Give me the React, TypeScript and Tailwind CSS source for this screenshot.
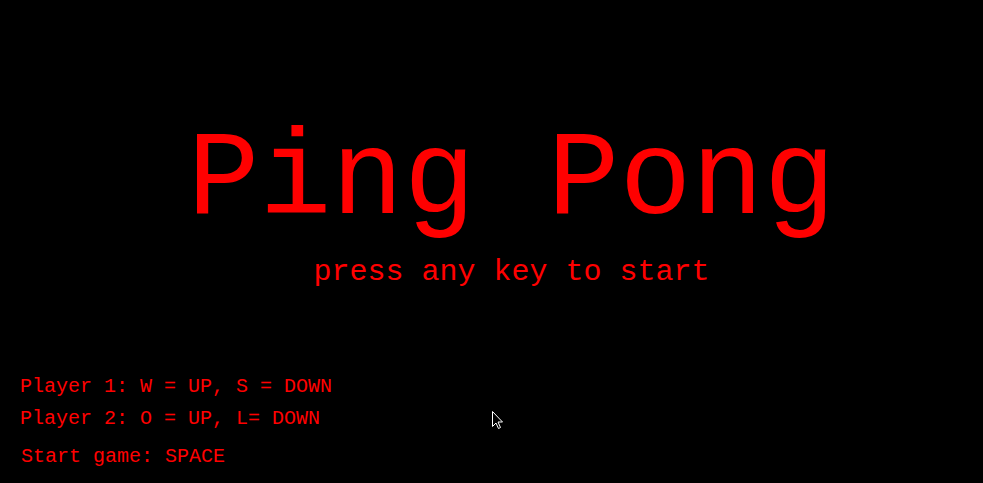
export default function App() {
    return (
        <div className="relative h-[483px] w-full overflow-hidden bg-black text-[#ff0000] font-['Courier_New','Liberation_Mono',monospace]">
            <div className="flex flex-col items-center pt-[121px] pl-10">
                <h1 className="text-[120px] leading-none whitespace-pre">Ping Pong</h1>
                <p className="mt-4 text-[30px] leading-none whitespace-pre">press any key to start</p>
            </div>

            <div className="mt-[90px] flex flex-col pl-5 text-[20px] leading-none whitespace-pre">
                <p>Player 1: W = UP, S = DOWN</p>
                <p className="mt-3">Player 2: O = UP, L= DOWN</p>
                <p className="mt-[18px] pl-px">Start game: SPACE</p>
            </div>

            {/* mouse pointer from the screenshot */}
            <svg className="absolute left-[492px] top-[411px]" width="12" height="19" viewBox="0 0 12 19">
                <path d="M0.5 0.5 L0.5 15.5 L4 12 L6.5 17.5 L8.5 16.5 L6 11 L10.5 11 Z" fill="black" stroke="white" strokeWidth="1" />
            </svg>
        </div>
    );
}
